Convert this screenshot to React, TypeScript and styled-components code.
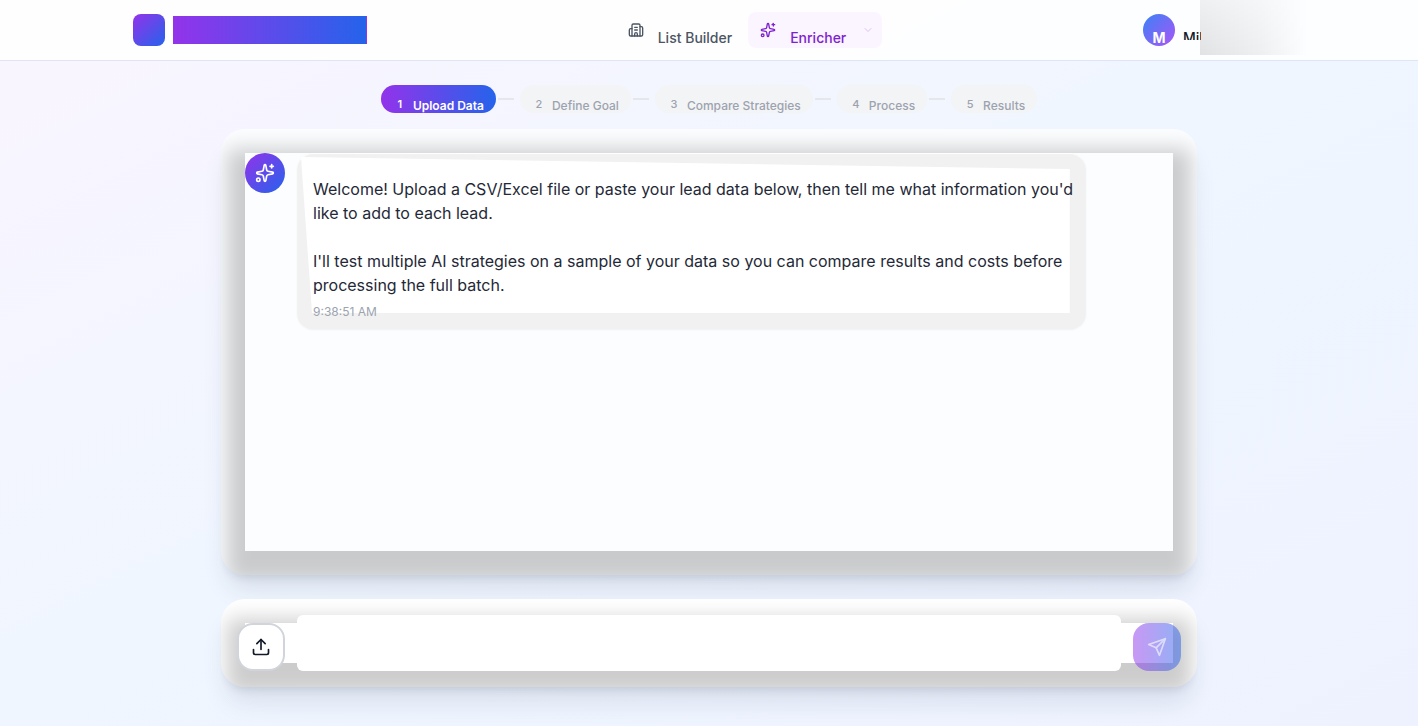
import React from "react";
import styled, { createGlobalStyle, css } from "styled-components";
import { Building2, ChevronDown, Sparkles, Upload } from "lucide-react";

const GlobalStyle = createGlobalStyle`
  *, *::before, *::after { box-sizing: border-box; }
  body {
    margin: 0;
    font-family: Inter, "Liberation Sans", sans-serif;
    color: #111827;
  }
  button, textarea { font: inherit; color: inherit; }
`;

const Page = styled.div`
  min-height: 100vh;
  display: flex;
  flex-direction: column;
  background: linear-gradient(to bottom right, #faf5ff, #eff6ff, #eef2ff);
`;

const Header = styled.header`
  background: rgba(255, 255, 255, 0.85);
  border-bottom: 1px solid #dfe6f3;
`;

const HeaderInner = styled.div`
  max-width: 1152px;
  height: 60px;
  margin: 0 auto;
  display: flex;
  align-items: center;
  justify-content: space-between;
`;

const Brand = styled.div`
  display: flex;
  align-items: center;
  gap: 8px;
`;

const BrandMark = styled.div`
  width: 32px;
  height: 32px;
  border-radius: 8px;
  background: linear-gradient(to bottom right, #9333ea, #2563eb);
`;

const BrandBar = styled.div`
  width: 194px;
  height: 28px;
  background: linear-gradient(to right, #9333ea, #2563eb) 0 0 / 193px 100%;
`;

const Nav = styled.nav`
  display: flex;
  gap: 4px;
`;

const NavButton = styled.button<{ $active?: boolean }>`
  height: 36px;
  display: flex;
  align-items: center;
  gap: 14px;
  padding: 0 12px;
  border: 0;
  border-radius: 8px;
  background: ${(p) => (p.$active ? "#faf5ff" : "transparent")};
  color: ${(p) => (p.$active ? "#7e22ce" : "#4b5563")};
  font-size: 14px;
  line-height: 20px;
  font-weight: 500;
  ${(p) => p.$active && css`padding-right: 8px;`}
`;

const NavLabel = styled.span`
  align-self: flex-end;
`;

const Chevron = styled(ChevronDown)`
  margin-left: 2px;
  color: #dcc3f7;
`;

const User = styled.div`
  position: relative;
  width: 154px;
  height: 60px;
  padding: 14px 12px;
  display: flex;
  gap: 8px;
`;

const Avatar = styled.div`
  flex: none;
  width: 32px;
  height: 32px;
  padding-top: 14px;
  border-radius: 50%;
  overflow: hidden;
  text-align: center;
  font-size: 14px;
  line-height: 20px;
  font-weight: 700;
  color: #fff;
  background: linear-gradient(to bottom right, #3b82f6, #a855f7);
`;

const UserName = styled.div`
  width: 18px;
  height: 26px;
  padding-top: 14px;
  overflow: hidden;
  font-size: 14px;
  line-height: 20px;
  font-weight: 500;
`;

const UserShade = styled.div`
  position: absolute;
  top: 0;
  left: 69px;
  width: 120px;
  height: 55px;
  background: linear-gradient(to right, rgba(0, 0, 0, 0.11), rgba(0, 0, 0, 0.06) 50%, transparent 90%);
  mask-image: linear-gradient(to bottom, rgba(0, 0, 0, 0.5), #000);
`;

const Main = styled.main`
  flex: 1;
  width: 100%;
  max-width: 976px;
  margin: 0 auto;
  padding: 24px 0 39px;
  display: flex;
  flex-direction: column;
`;

const Steps = styled.ol`
  list-style: none;
  margin: 0 0 16px;
  padding: 0;
  display: flex;
  justify-content: center;
`;

const StepItem = styled.li`
  display: flex;
  align-items: center;

  &:not(:last-child)::after {
    content: "";
    width: 16px;
    height: 2px;
    margin: 0 6px 0 2px;
    background: #e5e7eb;
  }
`;

const StepPill = styled.div<{ $active?: boolean }>`
  height: 28px;
  padding: 0 12px;
  display: flex;
  align-items: flex-end;
  gap: 6px;
  border-radius: 14px;
  overflow: hidden;
  font-size: 12px;
  line-height: 14px;
  font-weight: ${(p) => (p.$active ? 600 : 500)};
  color: ${(p) => (p.$active ? "#fff" : "#9ca3af")};
  background: ${(p) => (p.$active ? "linear-gradient(to right, #9333ea, #2563eb)" : "#f3f4f6")};
`;

const StepNumber = styled.span`
  width: 14px;
  padding-bottom: 2px;
  text-align: center;
  font-size: 11px;
`;

const Card = styled.section`
  position: relative;
  isolation: isolate;
  border-radius: 24px;
  overflow: hidden;
  background: #fff;
  box-shadow: 0 20px 25px -5px rgba(30, 41, 70, 0.1), 0 8px 10px -6px rgba(30, 41, 70, 0.14);

  &::before {
    content: "";
    position: absolute;
    z-index: -1;
    inset: 24px;
    background: #fff;
    box-shadow: 0 14px 20px 18px rgba(0, 0, 0, 0.2);
  }
`;

const ChatCard = styled(Card)`
  flex: 1;
  min-height: 320px;
  margin-bottom: 24px;
  padding: 24px;
  background: #fcfdff;

  &::before { background: #fcfdff; }
`;

const Message = styled.article`
  display: flex;
  align-items: flex-start;
  gap: 12px;
`;

const BotIcon = styled.div`
  flex: none;
  width: 40px;
  height: 40px;
  display: grid;
  place-items: center;
  border-radius: 50%;
  color: #fff;
  background: linear-gradient(to bottom right, #9333ea, #2563eb);
`;

const Bubble = styled.div`
  position: relative;
  isolation: isolate;
  max-width: 85%;
  padding: 24px 8px 9px 16px;
  border-radius: 16px;
  background: #f1f1f1;
  box-shadow: 0 1px 2px rgba(0, 0, 0, 0.05), inset 0 1px 1px #fff;

  &::before {
    content: "";
    position: absolute;
    z-index: -1;
    inset: 4px 16px 16px 4px;
    background: #fff;
    clip-path: polygon(0 0, 100% 12px, 100% 100%, 11px 100%);
  }
`;

const MessageText = styled.p`
  margin: 0;
  font-size: 16px;
  line-height: 24px;
  color: #1f2937;
  white-space: pre-line;
`;

const Time = styled.time`
  display: block;
  margin-top: 7px;
  font-size: 12px;
  line-height: 16px;
  color: #9ca3af;
`;

const Composer = styled(Card).attrs({ as: "form" })`
  padding: 16px;
  display: flex;
  align-items: flex-end;
  gap: 12px;
`;

const SquareButton = styled.button`
  flex: none;
  width: 48px;
  height: 48px;
  padding: 0;
  display: grid;
  place-items: center;
  border-radius: 16px;
`;

const UploadButton = styled(SquareButton)`
  border: 2px solid #d1d5db;
  background: #fff;
`;

const SendButton = styled(SquareButton)`
  border: 0;
  opacity: 0.5;
  background: linear-gradient(to right, #9333ea, #2563eb);
`;

const Input = styled.textarea`
  flex: 1;
  min-width: 0;
  height: 56px;
  padding: 16px;
  border: 0;
  border-radius: 6px;
  outline: 0;
  resize: none;
  background: #fff;
  font-size: 16px;
  line-height: 24px;
`;

const PlaneIcon = styled.svg`
  fill: none;
  stroke: #fff;
  stroke-width: 2;
  stroke-linecap: round;
  stroke-linejoin: round;
  opacity: 0.6;
`;

const STEPS = ["Upload Data", "Define Goal", "Compare Strategies", "Process", "Results"];

const WELCOME = `Welcome! Upload a CSV/Excel file or paste your lead data below, then tell me what information you'd like to add to each lead.

I'll test multiple AI strategies on a sample of your data so you can compare results and costs before processing the full batch.`;

export default function App() {
  return (
    <>
      <GlobalStyle />
      <Page>
        <Header>
          <HeaderInner>
            <Brand>
              <BrandMark />
              <BrandBar />
            </Brand>
            <Nav>
              <NavButton type="button">
                <Building2 size={16} />
                <NavLabel>List Builder</NavLabel>
              </NavButton>
              <NavButton type="button" $active>
                <Sparkles size={16} />
                <NavLabel>Enricher</NavLabel>
                <Chevron size={12} />
              </NavButton>
            </Nav>
            <User>
              <Avatar>M</Avatar>
              <UserName>Mil</UserName>
              <UserShade />
            </User>
          </HeaderInner>
        </Header>
        <Main>
          <Steps>
            {STEPS.map((label, i) => (
              <StepItem key={label}>
                <StepPill $active={i === 0}>
                  <StepNumber>{i + 1}</StepNumber>
                  <span>{label}</span>
                </StepPill>
              </StepItem>
            ))}
          </Steps>
          <ChatCard>
            <Message>
              <BotIcon>
                <Sparkles size={20} />
              </BotIcon>
              <Bubble>
                <MessageText>{WELCOME}</MessageText>
                <Time>9:38:51 AM</Time>
              </Bubble>
            </Message>
          </ChatCard>
          <Composer>
            <UploadButton type="button" aria-label="Upload file">
              <Upload size={20} />
            </UploadButton>
            <Input aria-label="Message" />
            <SendButton type="submit" aria-label="Send" disabled>
              <PlaneIcon width={20} height={20} viewBox="0 0 24 24" aria-hidden="true">
                <path d="m22 2-7 20-4-9-9-4Z" />
                <path d="M22 2 11 13" />
              </PlaneIcon>
            </SendButton>
          </Composer>
        </Main>
      </Page>
    </>
  );
}
